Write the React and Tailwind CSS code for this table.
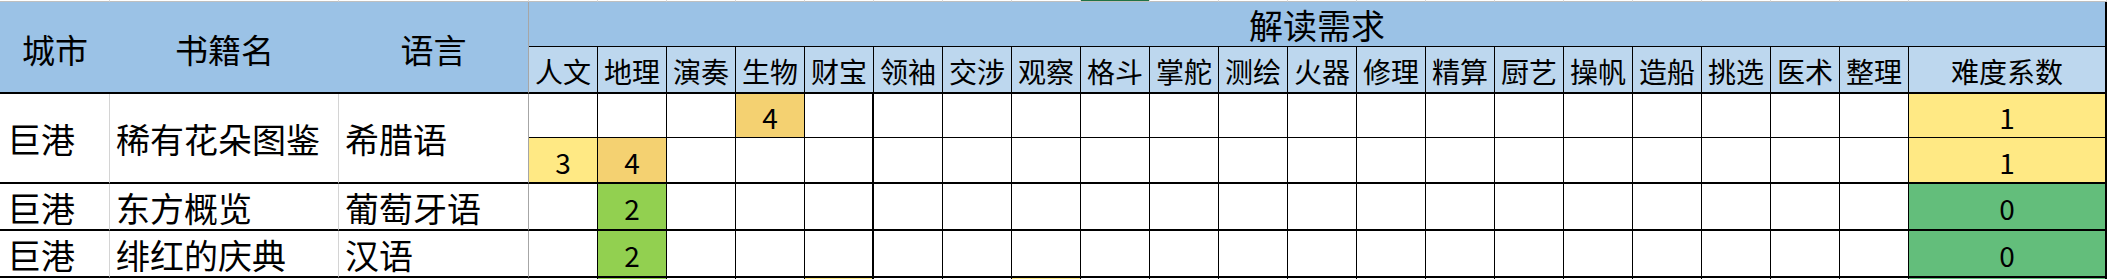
import React from 'react';

const SUBS = ['人文', '地理', '演奏', '生物', '财宝', '领袖', '交涉', '观察', '格斗', '掌舵', '测绘', '火器', '修理', '精算', '厨艺', '操帆', '造船', '挑选', '医术', '整理'];

const FILL = {
  y: 'bg-[#ffe984]',
  o: 'bg-[#f4d171]',
  g: 'bg-[#92d050]',
  g0: 'bg-[#63be7b]',
};

// each record: sub-rows of {index: [value, fill]} + score
const RECORDS = [
  {
    city: '巨港',
    book: '稀有花朵图鉴',
    lang: '希腊语',
    rows: [
      { cells: { 3: ['4', 'o'] }, score: ['1', 'y'] },
      { cells: { 0: ['3', 'y'], 1: ['4', 'o'] }, score: ['1', 'y'] },
    ],
  },
  {
    city: '巨港',
    book: '东方概览',
    lang: '葡萄牙语',
    rows: [{ cells: { 1: ['2', 'g'] }, score: ['0', 'g0'] }],
  },
  {
    city: '巨港',
    book: '绯红的庆典',
    lang: '汉语',
    rows: [{ cells: { 1: ['2', 'g'] }, score: ['0', 'g0'] }],
  },
];

function SubRow({ row, last }) {
  const bottom = last ? 'border-b-2' : 'border-b';
  return (
    <>
      {SUBS.map((s, i) => {
        const cell = row.cells[i];
        return (
          <div
            key={s}
            className={`flex items-center justify-center border-black text-[28px] leading-none pt-[3px] ${bottom} ${i === 4 ? 'border-r-2' : 'border-r'} ${cell ? FILL[cell[1]] : 'bg-white'}`}
          >
            {cell ? cell[0] : ''}
          </div>
        );
      })}
      <div className={`flex items-center justify-center border-black border-r-2 text-[28px] leading-none pt-[3px] ${bottom} ${FILL[row.score[1]]}`}>
        {row.score[0]}
      </div>
    </>
  );
}

export default function App() {
  const leftCell = 'flex items-center whitespace-nowrap text-[34px] leading-none pt-[2px] border-b-2 border-r border-b-black';
  const headCell = 'row-span-2 flex items-center justify-center bg-[#9bc2e6] border-b-2 border-black text-[33px] leading-none pt-[4px]';
  const span = (n) => (n === 2 ? 'row-span-2' : '');

  return (
    <div className="w-[2108px] h-[279px] overflow-hidden bg-white text-black font-['Noto_Sans_CJK_SC',sans-serif]">
      <div className="grid grid-cols-[110px_229px_190px_repeat(20,69px)_198px] grid-rows-[2px_45px_47px_44px_46px_47px_47px_2px]">
        {/* sliver of the row above */}
        {Array.from({ length: 24 }).map((_, i) => (
          <div
            key={'t' + i}
            className={`border-b border-r border-b-[#bfbfbf] border-r-[#d9d9d9] ${i === 11 ? 'bg-[#217346]' : 'bg-white'}`}
          />
        ))}

        {/* header */}
        <div className={headCell}>城市</div>
        <div className={headCell}>书籍名</div>
        <div className={`${headCell} border-r border-r-[#a6a6a6]`}>语言</div>
        <div className="col-span-21 flex items-center justify-center bg-[#9bc2e6] border-b border-r-2 border-black text-[34px] leading-none pt-[2px]">解读需求</div>
        {SUBS.map((s) => (
          <div key={s} className="flex items-center justify-center bg-[#bdd7ee] border-b-2 border-r border-black text-[28px] leading-none pt-[3px]">
            {s}
          </div>
        ))}
        <div className="flex items-center justify-center bg-[#bdd7ee] border-b-2 border-r-2 border-black text-[28px] leading-none pt-[3px]">难度系数</div>

        {/* records */}
        {RECORDS.map((r, ri) => (
          <React.Fragment key={ri}>
            <div className={`${leftCell} ${span(r.rows.length)} border-r-[#d4d4d4] pl-[7px]`}>{r.city}</div>
            <div className={`${leftCell} ${span(r.rows.length)} border-r-[#d4d4d4] pl-[6px]`}>{r.book}</div>
            <div className={`${leftCell} ${span(r.rows.length)} border-r-[#a6a6a6] pl-[6px]`}>{r.lang}</div>
            {r.rows.map((row, k) => (
              <SubRow key={k} row={row} last={k === r.rows.length - 1} />
            ))}
          </React.Fragment>
        ))}

        {/* sliver of the next row */}
        <div className="bg-white border-r border-r-[#d4d4d4]" />
        <div className="bg-white border-r border-r-[#d4d4d4]" />
        <div className="bg-white border-r border-r-[#a6a6a6]" />
        {SUBS.map((s, i) => (
          <div
            key={'b' + s}
            className={`border-black ${i === 4 ? 'border-r-2' : 'border-r'} ${i === 1 ? 'bg-[#92d050]' : i === 4 || i === 7 ? 'bg-[#ffe984]' : 'bg-white'}`}
          />
        ))}
        <div className="bg-[#63be7b] border-r-2 border-black" />
      </div>
    </div>
  );
}
